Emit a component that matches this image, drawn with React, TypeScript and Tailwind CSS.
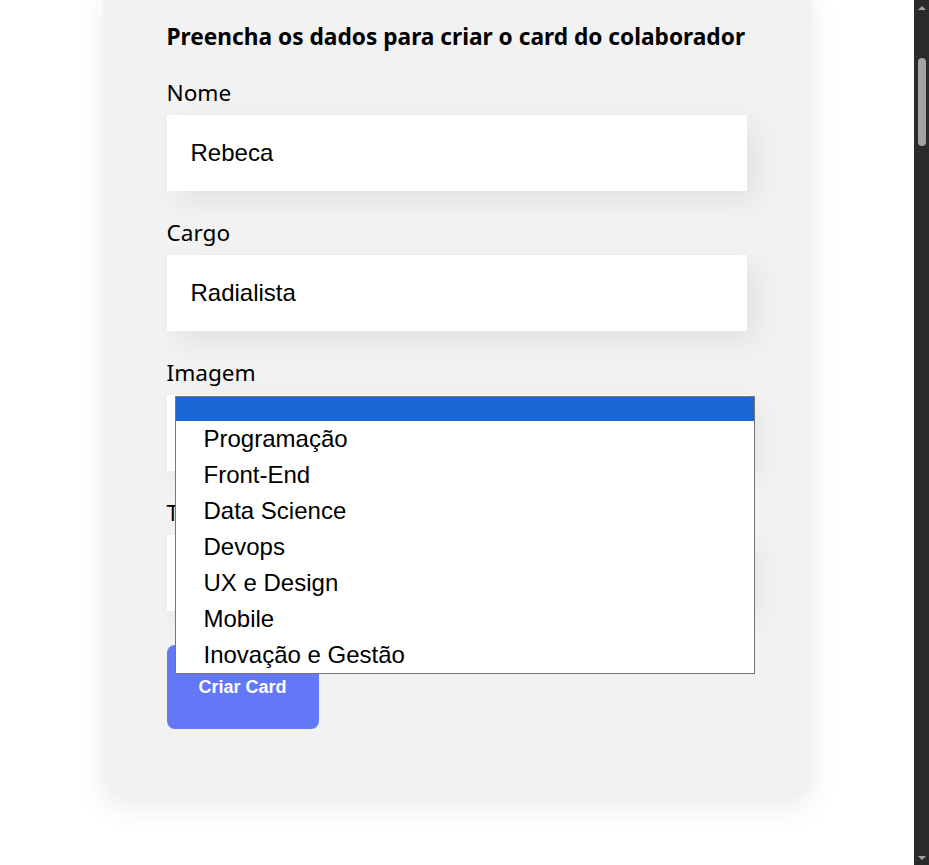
// Formulário de criação de card do colaborador (página rolada, select "Imagem" aberto)

const sans = 'font-["Noto_Sans","Open_Sans",sans-serif]';
const arial = 'font-["Liberation_Sans",Arial,sans-serif]';

const opcoes = [
  'Programação',
  'Front-End',
  'Data Science',
  'Devops',
  'UX e Design',
  'Mobile',
  'Inovação e Gestão',
];

function Rotulo({ children }: { children: string }) {
  return (
    <label className={`block text-[22.6px] leading-[27px] mb-[9px] text-black ${sans}`}>{children}</label>
  );
}

function Campo({ label, valor }: { label: string; valor: string }) {
  return (
    <div className="mb-[28px]">
      <Rotulo>{label}</Rotulo>
      <div
        className={`h-[76px] w-full bg-white px-[24px] flex items-center text-[24px] text-black shadow-[10px_10px_30px_rgba(0,0,0,0.07)] ${arial}`}
      >
        {valor}
      </div>
    </div>
  );
}

function ListaAberta() {
  return (
    <ul className={`absolute left-[8px] top-[1px] z-10 w-[580px] bg-white border border-[#767676] ${arial}`}>
      <li className="h-[24px] bg-[#1967d2]" />
      {opcoes.map((op) => (
        <li key={op} className="h-[36px] pl-[28px] text-[24px] leading-[36px] text-black">
          {op}
        </li>
      ))}
    </ul>
  );
}

function CampoSelect({ label, aberto, ultimo }: { label: string; aberto?: boolean; ultimo?: boolean }) {
  return (
    <div className={ultimo ? 'mb-[34px]' : 'mb-[28px]'}>
      <Rotulo>{label}</Rotulo>
      <div className="relative h-[76px] w-full bg-white shadow-[10px_10px_30px_rgba(0,0,0,0.07)]">
        {aberto && <ListaAberta />}
      </div>
    </div>
  );
}

function BarraRolagem() {
  return (
    <div className="w-[15px] shrink-0 bg-[#2b2b2b] flex flex-col items-center">
      <div className="h-[15px] flex items-center justify-center">
        <div className="w-0 h-0 border-l-[4px] border-r-[4px] border-b-[4px] border-l-transparent border-r-transparent border-b-[#a3a3a3]" />
      </div>
      <div className="mt-[43px] h-[88px] w-[8px] rounded-full bg-[#a3a3a3]" />
      <div className="flex-1" />
      <div className="h-[15px] flex items-center justify-center">
        <div className="w-0 h-0 border-l-[4px] border-r-[4px] border-t-[4px] border-l-transparent border-r-transparent border-t-[#a3a3a3]" />
      </div>
    </div>
  );
}

export default function App() {
  return (
    <div className="flex h-[865px] overflow-hidden bg-white">
      <main className="flex-1 min-w-0">
        <section className="w-[709px] mx-auto -mt-[17px] bg-[#f2f2f2] rounded-[20px] pt-[40px] pb-[68px] pl-[64px] pr-[65px] shadow-[0_10px_30px_rgba(0,0,0,0.08)]">
          <form onSubmit={(e) => e.preventDefault()}>
            <h2 className={`whitespace-nowrap text-[22.7px] leading-[28px] font-bold text-black mb-[28px] ${sans}`}>
              Preencha os dados para criar o card do colaborador
            </h2>
            <Campo label="Nome" valor="Rebeca" />
            <Campo label="Cargo" valor="Radialista" />
            <CampoSelect label="Imagem" aberto />
            <CampoSelect label="Time" ultimo />
            <button
              type="submit"
              className={`w-[152px] h-[84px] rounded-[8px] bg-[#6278f7] text-white text-[18px] font-bold ${arial}`}
            >
              Criar Card
            </button>
          </form>
        </section>
      </main>
      <BarraRolagem />
    </div>
  );
}
